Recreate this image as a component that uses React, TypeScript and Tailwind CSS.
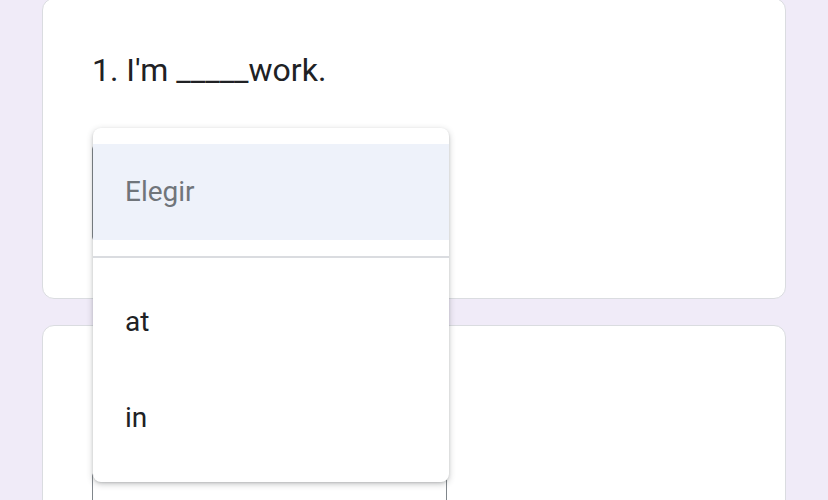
import React from "react";

export default function App() {
  return (
    <div className="relative w-[828px] h-[500px] overflow-hidden bg-[#f0ebf8] font-['Roboto',sans-serif]">
      <div className="flex flex-col gap-[26px] px-[42px] -mt-[2px]">
        <div className="h-[301px] shrink-0 rounded-[12px] border border-[#dadce0] bg-white pl-[49px] pt-[51px]">
          <div className="text-[32px] leading-[40px] text-[#202124]">1. I'm _____work.</div>
          <div className="mt-[55px] h-[96px] w-[355px] rounded-[4px] border border-[#80868b]"></div>
        </div>
        <div className="h-[300px] shrink-0 rounded-[12px] border border-[#dadce0] bg-white pl-[49px] pt-[51px]">
          <div className="h-[40px]"></div>
          <div className="mt-[55px] h-[96px] w-[355px] rounded-[4px] border border-[#80868b]"></div>
        </div>
      </div>
      <div className="absolute left-[93px] top-[128px] w-[356px] h-[354px] rounded-[8px] bg-white pt-[16px] shadow-[0_2px_6px_rgba(60,64,67,0.3),0_1px_2px_rgba(60,64,67,0.15)]">
        <div className="flex h-[96px] items-center bg-[#eef2fa] pl-[32px] text-[28px] text-[#70757a]">Elegir</div>
        <div className="my-[16px] h-[2px] bg-[#dadce0]"></div>
        <div className="flex h-[96px] items-center pl-[32px] text-[28px] text-[#202124]">at</div>
        <div className="flex h-[96px] items-center pl-[32px] text-[28px] text-[#202124]">in</div>
      </div>
    </div>
  );
}
